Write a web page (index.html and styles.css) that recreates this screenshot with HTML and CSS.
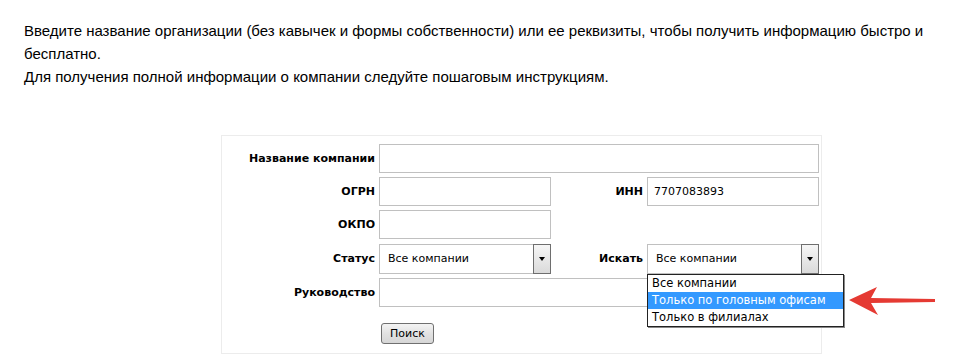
FILE: index.html
```html
<!DOCTYPE html>
<html lang="ru">
<head>
<meta charset="utf-8">
<title>Поиск компании</title>
<link rel="stylesheet" href="styles.css">
</head>
<body>
<div class="intro">
  <p>Введите название организации (без кавычек и формы собственности) или ее реквизиты, чтобы получить информацию быстро и бесплатно.</p>
  <p>Для получения полной информации о компании следуйте пошаговым инструкциям.</p>
</div>

<form class="panel">
  <label class="lbl">Название компании</label>
  <div class="field span3"></div>

  <label class="lbl">ОГРН</label>
  <div class="field"></div>
  <label class="lbl">ИНН</label>
  <div class="field">7707083893</div>

  <label class="lbl">ОКПО</label>
  <div class="field"></div>
  <div class="empty"></div>
  <div class="empty"></div>

  <label class="lbl">Статус</label>
  <div class="select"><span class="sel-text">Все компании</span><span class="sel-btn"><span class="tri"></span></span></div>
  <label class="lbl">Искать</label>
  <div class="select open"><span class="sel-text">Все компании</span><span class="sel-btn"><span class="tri"></span></span>
    <ul class="options">
      <li>Все компании</li>
      <li class="hl">Только по головным офисам</li>
      <li>Только в филиалах</li>
    </ul>
  </div>

  <label class="lbl">Руководство</label>
  <div class="field span3"></div>

  <div class="empty"></div>
  <div class="btn-cell"><button type="button" class="btn">Поиск</button></div>
</form>

<svg class="pointer" width="92" height="34" viewBox="0 0 92 34" aria-hidden="true">
  <path d="M2 16 L30 3 L24 14 L88 15 L88 18 L24 19 L31 31 Z" fill="#e53a33"/>
</svg>
</body>
</html>
```
FILE: styles.css
```css
html, body {
  margin: 0;
  padding: 0;
  background: #fff;
}
body {
  position: relative;
  width: 953px;
  height: 364px;
  overflow: hidden;
  font-family: "DejaVu Sans", Verdana, sans-serif;
  color: #000;
}
.intro {
  padding: 19px 0 0 24px;
  width: 912px;
  font-family: "Liberation Sans", Arial, sans-serif;
  font-size: 15px;
  line-height: 23px;
  color: #000;
}
.intro p {
  margin: 0;
}
.panel {
  margin: 47px 0 0 221px;
  width: 586px;
  padding: 8px 3px 9px 10px;
  border: 1px solid #ececec;
  display: grid;
  grid-template-columns: 143px 172px 88px 172px;
  grid-auto-rows: auto;
  column-gap: 4px;
  row-gap: 4px;
  align-items: center;
}
.lbl {
  font-size: 11px;
  font-weight: bold;
  text-align: right;
  white-space: nowrap;
}
.field {
  box-sizing: border-box;
  height: 29px;
  border: 1px solid #c0c0c0;
  background: #fff;
  font-size: 11px;
  line-height: 27px;
  padding-left: 6px;
}
.span3 {
  grid-column: 2 / 5;
}
.empty {
  height: 29px;
}
.select {
  position: relative;
  box-sizing: border-box;
  height: 30px;
  margin-top: 1px;
  border: 1px solid #c0c0c0;
  display: flex;
  align-items: stretch;
  font-size: 11px;
  background: #fff;
}
.sel-text {
  flex: 1;
  padding-left: 8px;
  line-height: 28px;
}
.sel-btn {
  width: 16px;
  margin: -1px -1px -1px 0;
  border: 1px solid #6e6e6e;
  background: linear-gradient(#f6f6f6, #dadada);
  display: flex;
  align-items: center;
  justify-content: center;
}
.tri {
  width: 0;
  height: 0;
  border-left: 3.5px solid transparent;
  border-right: 3.5px solid transparent;
  border-top: 4px solid #000;
}
.options {
  position: absolute;
  left: -1px;
  top: 29px;
  width: 197px;
  box-sizing: border-box;
  margin: 0;
  padding: 0;
  list-style: none;
  border: 1px solid #222;
  box-shadow: 1px 1px 0 #888;
  background: #fff;
  z-index: 5;
  font-size: 11.5px;
}
.options li {
  height: 17px;
  line-height: 17px;
  padding-left: 4px;
  white-space: nowrap;
}
.options li.hl {
  background: #3399ff;
  color: #fff;
}
.btn-cell {
  padding-top: 11px;
}
.btn {
  margin-left: 2px;
  width: 53px;
  height: 21px;
  padding: 0;
  border: 1px solid #707070;
  border-radius: 3px;
  background: linear-gradient(#f4f4f4, #e2e2e2 50%, #d6d6d6);
  font-family: "DejaVu Sans", Verdana, sans-serif;
  font-size: 11px;
  color: #000;
}
.pointer {
  position: absolute;
  left: 847px;
  top: 284px;
}
```
